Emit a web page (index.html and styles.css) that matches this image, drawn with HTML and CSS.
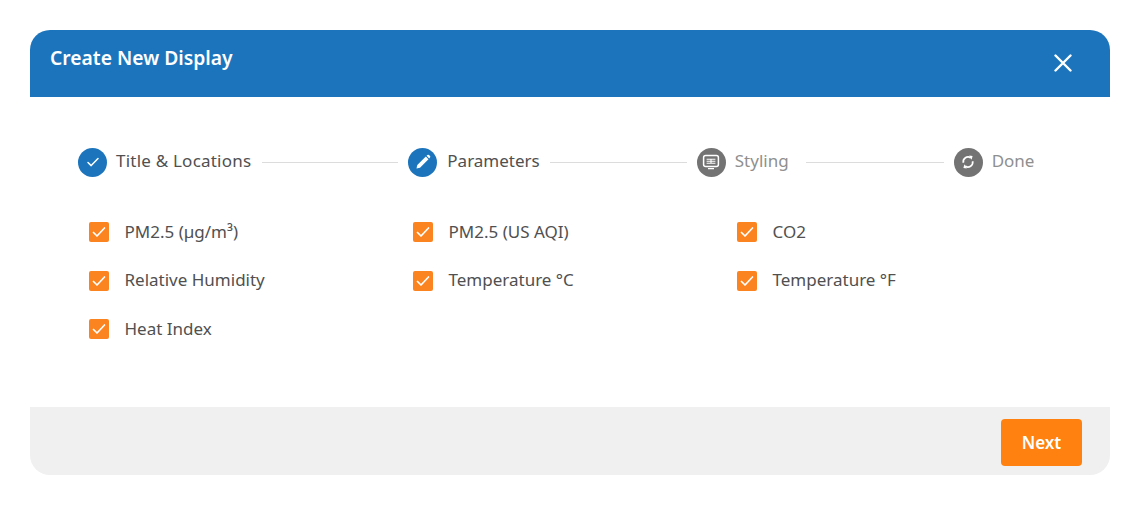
FILE: index.html
```html
<!DOCTYPE html>
<html lang="en">
<head>
<meta charset="utf-8">
<title>Create New Display</title>
<link rel="stylesheet" href="styles.css">
</head>
<body>
<main class="dialog">
  <header class="dialog-header">
    <h1 class="dialog-title">Create New Display</h1>
    <button class="close" aria-label="Close">
      <svg width="18" height="18" viewBox="0 0 18 18"><path d="M1.5 1.5 16.5 16.5M16.5 1.5 1.5 16.5" stroke="#fff" stroke-width="2.4" stroke-linecap="round" fill="none"/></svg>
    </button>
  </header>
  <section class="dialog-body">
    <ol class="stepper">
      <li class="step">
        <span class="step-icon step-icon-blue">
          <svg width="14" height="12" viewBox="0 0 14 12"><path d="M2 6.5 5.2 9.6 12 2.6" stroke="#fff" stroke-width="1.5" stroke-linecap="round" stroke-linejoin="round" fill="none"/></svg>
        </span>
        <span class="step-label step-label-wide">Title &amp; Locations</span>
      </li>
      <li class="step-line step-line-first"></li>
      <li class="step step-roomy">
        <span class="step-icon step-icon-blue">
          <svg width="16" height="16" viewBox="0 0 16 16"><path d="M1.5 14.5 2.3 11 10.8 2.5 13.5 5.2 5 13.7Z" fill="#fff"/><path d="M11.6 1.7 12.4 1a1.2 1.2 0 0 1 1.6 0L15 2a1.2 1.2 0 0 1 0 1.6l-.8.8Z" fill="#fff"/></svg>
        </span>
        <span class="step-label">Parameters</span>
      </li>
      <li class="step-line step-line-second"></li>
      <li class="step">
        <span class="step-icon step-icon-grey">
          <svg width="18" height="16" viewBox="0 0 18 16"><rect x="1.6" y="1.4" width="14.8" height="11.2" rx="2" fill="none" stroke="#fff" stroke-width="1.5"/><path d="M4.6 5.2h8.8M4.6 7.2h8.8M4.6 9.2h8.8M9 5.2v4M6 14.6h6" stroke="#fff" stroke-width="1.1" fill="none"/></svg>
        </span>
        <span class="step-label step-label-muted">Styling</span>
      </li>
      <li class="step-line step-line-third"></li>
      <li class="step">
        <span class="step-icon step-icon-grey">
          <svg width="16" height="16" viewBox="0 0 16 16"><path d="M3.4 8.8A4.7 4.7 0 0 1 10.8 4M12.6 7.2A4.7 4.7 0 0 1 5.2 12" stroke="#fff" stroke-width="1.7" fill="none"/><path d="M9.2 1.4 12.6 2 11.6 5.8ZM6.8 14.6 3.4 14 4.4 10.2Z" fill="#fff"/></svg>
        </span>
        <span class="step-label step-label-muted">Done</span>
      </li>
    </ol>
    <ul class="options">
      <li class="option"><span class="box"><svg width="14" height="12" viewBox="0 0 14 12"><path d="M1.5 6.5 5 10 12.5 2" stroke="#fff" stroke-width="1.7" stroke-linecap="round" stroke-linejoin="round" fill="none"/></svg></span><span class="option-text">PM2.5 (µg/m³)</span></li>
      <li class="option"><span class="box"><svg width="14" height="12" viewBox="0 0 14 12"><path d="M1.5 6.5 5 10 12.5 2" stroke="#fff" stroke-width="1.7" stroke-linecap="round" stroke-linejoin="round" fill="none"/></svg></span><span class="option-text">PM2.5 (US AQI)</span></li>
      <li class="option"><span class="box"><svg width="14" height="12" viewBox="0 0 14 12"><path d="M1.5 6.5 5 10 12.5 2" stroke="#fff" stroke-width="1.7" stroke-linecap="round" stroke-linejoin="round" fill="none"/></svg></span><span class="option-text">CO2</span></li>
      <li class="option"><span class="box"><svg width="14" height="12" viewBox="0 0 14 12"><path d="M1.5 6.5 5 10 12.5 2" stroke="#fff" stroke-width="1.7" stroke-linecap="round" stroke-linejoin="round" fill="none"/></svg></span><span class="option-text">Relative Humidity</span></li>
      <li class="option"><span class="box"><svg width="14" height="12" viewBox="0 0 14 12"><path d="M1.5 6.5 5 10 12.5 2" stroke="#fff" stroke-width="1.7" stroke-linecap="round" stroke-linejoin="round" fill="none"/></svg></span><span class="option-text">Temperature °C</span></li>
      <li class="option"><span class="box"><svg width="14" height="12" viewBox="0 0 14 12"><path d="M1.5 6.5 5 10 12.5 2" stroke="#fff" stroke-width="1.7" stroke-linecap="round" stroke-linejoin="round" fill="none"/></svg></span><span class="option-text">Temperature °F</span></li>
      <li class="option"><span class="box"><svg width="14" height="12" viewBox="0 0 14 12"><path d="M1.5 6.5 5 10 12.5 2" stroke="#fff" stroke-width="1.7" stroke-linecap="round" stroke-linejoin="round" fill="none"/></svg></span><span class="option-text">Heat Index</span></li>
    </ul>
  </section>
  <footer class="dialog-footer">
    <button class="next">Next</button>
  </footer>
</main>
</body>
</html>
```
FILE: styles.css
```css
* { box-sizing: border-box; }
html, body { margin: 0; padding: 0; background: #fff; }
body {
  padding: 30px 30px 31px;
  font-family: "Noto Sans", "Open Sans", sans-serif;
  color: #505050;
}
.dialog { width: 1080px; height: 445px; display: flex; flex-direction: column; }
.dialog-header {
  height: 67px;
  flex: none;
  background: #1c75bc;
  border-radius: 20px 20px 0 0;
  display: flex;
  align-items: center;
  justify-content: space-between;
  padding: 0 38px 11px 20px;
}
.dialog-title { margin: 0; font-size: 19.3px; font-weight: 600; color: #fff; line-height: 28px; }
.close { display: flex; width: 18px; height: 18px; padding: 0; border: 0; background: none; margin-top: 9px; }
.dialog-body { flex: 1; background: #fff; }
.stepper {
  list-style: none;
  margin: 0;
  padding: 50px 0 0 48px;
  display: flex;
  align-items: center;
  height: 80px;
}
.step { display: flex; align-items: center; gap: 9px; flex: none; }
.step-roomy { gap: 10px; }
.step-icon { width: 29px; height: 29px; border-radius: 50%; display: flex; align-items: center; justify-content: center; flex: none; }
.step-icon-blue { background: #1c75bc; }
.step-icon-grey { background: #737373; }
.step-label { font-size: 17px; line-height: 24px; padding-bottom: 2px; color: #505050; }
.step-label-wide { letter-spacing: 0.22px; }
.step-label-muted { color: #8f8f8f; }
.step-line { flex: none; height: 1px; background: #dcdcdc; margin-top: 1px; margin-right: 10px; }
.step-line-first { width: 136px; margin-left: 11px; }
.step-line-second { width: 137px; margin-left: 10px; }
.step-line-third { width: 138px; margin-left: 17px; }
.options {
  list-style: none;
  margin: 0;
  padding: 43px 0 0 59px;
  display: grid;
  grid-template-columns: repeat(3, 324px);
  grid-auto-rows: 48.5px;
}
.option { display: flex; align-items: center; gap: 15.5px; font-size: 17px; height: 24px; color: #505050; }
.option-text { padding-bottom: 2px; }
.box { width: 20px; height: 20px; background: #fb8420; border-radius: 2px; display: flex; align-items: center; justify-content: center; flex: none; }
.dialog-footer {
  height: 68px;
  flex: none;
  background: #f0f0f0;
  border-radius: 0 0 20px 20px;
  display: flex;
  align-items: center;
  justify-content: flex-end;
  padding: 3px 28px 0 0;
}
.next {
  width: 81px;
  height: 47px;
  border: 0;
  border-radius: 4px;
  background: #ff8210;
  color: #fff;
  font: 600 17px "Noto Sans", sans-serif;
}
```
